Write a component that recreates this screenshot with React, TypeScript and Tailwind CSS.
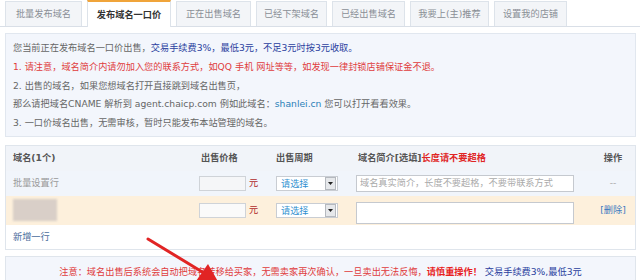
import React from "react";

const tabs = [
  { label: "批量发布域名", w: "w-[77px]" },
  { label: "发布域名一口价", w: "w-[84px]", active: true },
  { label: "正在出售域名", w: "w-[75px]" },
  { label: "已经下架域名", w: "w-[71px]" },
  { label: "已经出售域名", w: "w-[73px]" },
  { label: "我要上(主)推荐", w: "w-[79px]" },
  { label: "设置我的店铺", w: "w-[73px]" },
];

function SelectBox() {
  return (
    <div className="flex items-center w-[62px] h-[15px] bg-white border border-[#c9cdd3] ml-[3px]">
      <span className="flex-1 pl-[4px] text-[#2f8fd0] leading-none">请选择</span>
      <span className="w-[11px] h-[13px] mr-[1px] bg-[#e6e8eb] border border-[#b5b9bf] flex items-center justify-center">
        <svg width="5" height="3" viewBox="0 0 5 3">
          <path d="M0 0 L5 0 L2.5 3 Z" fill="#222" />
        </svg>
      </span>
    </div>
  );
}

function PriceCell({ bg }: { bg: string }) {
  return (
    <div className="w-[77px] flex items-center pl-[3px]">
      <div className={`w-[47px] h-[15px] border border-[#cfd3d8] ${bg}`} />
      <span className="ml-[3px] text-[#b02a2a]">元</span>
    </div>
  );
}

export default function App() {
  return (
    <div className="relative w-[640px] h-[280px] overflow-hidden bg-white text-[9.2px] [font-family:'DejaVu_Sans','Noto_Sans_CJK_SC',sans-serif]">
      {/* Tabs */}
      <div className="flex items-end gap-[5px] pl-[5px] h-[27px] border-b border-[#d9dfe7]">
        {tabs.map((t) =>
          t.active ? (
            <div
              key={t.label}
              className={`${t.w} h-[27px] -mb-px flex items-center justify-center bg-white border-t-2 border-x border-t-[#f0a43a] border-x-[#dde3ea] text-[#333] font-semibold`}
            >
              {t.label}
            </div>
          ) : (
            <div
              key={t.label}
              className={`${t.w} h-[25px] flex items-center justify-center bg-[#f3f5f8] border border-b-0 border-[#dde3ea] text-[#8a8f96]`}
            >
              {t.label}
            </div>
          )
        )}
      </div>

      {/* Info box */}
      <div className="ml-[5px] mr-[4px] mt-[6px] border border-[#e1e7ef] bg-[#f3f6fc] pl-[7px] pt-[5px] pb-[3px] leading-[18.75px] text-[#666]">
        <div>
          您当前正在发布域名一口价出售，
          <span className="text-[#2a3e9e]">交易手续费3%，最低3元，不足3元时按3元收取。</span>
        </div>
        <div className="text-[#e03c3c]">
          1. 请注意，域名简介内请勿加入您的联系方式，如QQ 手机 网址等等，如发现一律封锁店铺保证金不退。
        </div>
        <div>2. 出售的域名，如果您想域名打开直接跳到域名出售页，</div>
        <div>
          那么请把域名CNAME 解析到 agent.chaicp.com 例如此域名：
          <span className="text-[#2a7fb8]">shanlei.cn</span> 您可以打开看看效果。
        </div>
        <div>3. 一口价域名出售，无需审核，暂时只能发布本站管理的域名。</div>
      </div>

      {/* Table box */}
      <div className="ml-[5px] mr-[4px] mt-[8px] border border-[#dfe5ec] bg-white">
        <div className="flex items-center h-[25px] bg-[#f1f4f9] text-[#555] font-semibold">
          <div className="w-[190px] pl-[7px]">域名(1个)</div>
          <div className="w-[77px] pl-[5px]">出售价格</div>
          <div className="w-[80px] pl-[3px]">出售周期</div>
          <div className="w-[238px] pl-[5px]">
            域名简介[选填]<span className="text-[#e02525]">长度请不要超格</span>
          </div>
          <div className="flex-1 text-center">操作</div>
        </div>

        <div className="flex items-center h-[25px] bg-[#f1f5fb]">
          <div className="w-[190px] pl-[7px] text-[#999]">批量设置行</div>
          <PriceCell bg="bg-[#f5f6f8]" />
          <div className="w-[80px]">
            <SelectBox />
          </div>
          <div className="w-[238px] pl-[3px]">
            <div className="w-[218px] h-[17px] border border-[#c5c9cf] bg-white flex items-center pl-[3px] text-[#aaa]">
              域名真实简介，长度不要超格，不要带联系方式
            </div>
          </div>
          <div className="flex-1 text-center text-[#aaa]">--</div>
        </div>

        <div className="flex items-center h-[29px] bg-[#fdf0dc]">
          <div className="w-[190px] pl-[7px]">
            <div className="w-[44px] h-[22px] bg-[#d9cfc8] blur-[1px]" />
          </div>
          <PriceCell bg="bg-[#fafafa]" />
          <div className="w-[80px]">
            <SelectBox />
          </div>
          <div className="w-[238px] pl-[3px] self-end pb-[1px]">
            <div className="w-[218px] h-[22px] border border-[#c5c9cf] bg-white" />
          </div>
          <div className="flex-1 text-center text-[#3a78c0]">[删除]</div>
        </div>

        <div className="flex items-center h-[24px] pl-[7px] text-[#4a6d9c]">新增一行</div>
      </div>

      {/* Notice */}
      <div className="ml-[5px] mr-[4px] mt-[6px] h-[30px] border border-[#dfe5ec] bg-[#f3f6fc] pt-[8px] text-center text-[#e03c3c]">
        注意：域名出售后系统会自动把域名转移给买家，无需卖家再次确认，一旦卖出无法反悔，
        <span className="text-[#e81f1f] font-semibold">请慎重操作！</span>
        <span className="text-[#2a3e9e]"> 交易手续费3%,最低3元</span>
      </div>

      {/* Red arrow overlay */}
      <svg className="absolute left-0 top-0 pointer-events-none" width="640" height="280" viewBox="0 0 640 280">
        <line x1="148" y1="239" x2="204" y2="273" stroke="#e12424" strokeWidth="3" strokeLinecap="round" />
        <polygon points="220,285 196,281 208,264" fill="#e12424" />
      </svg>
    </div>
  );
}
